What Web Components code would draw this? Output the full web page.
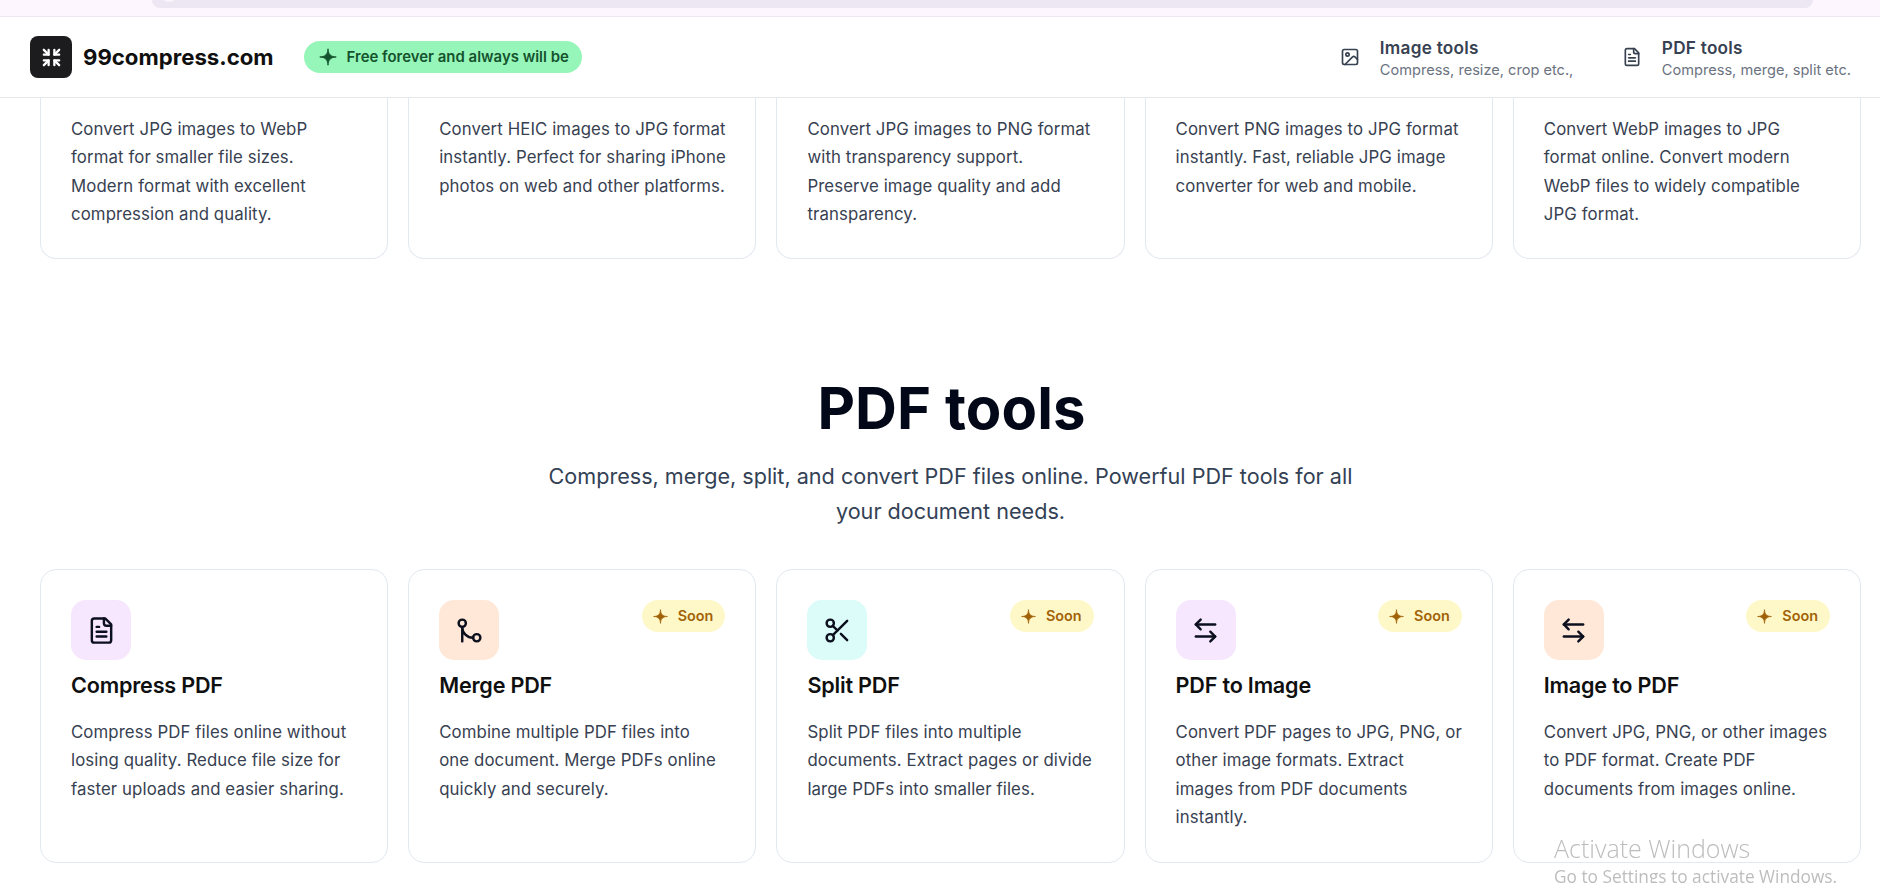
<!DOCTYPE html>
<html lang="en">
<head>
<meta charset="utf-8">
<title>99compress.com</title>
<style>
  html, body { margin: 0; height: 883px; overflow: hidden; background: #fff; }
  body { font-family: Inter, "Liberation Sans", sans-serif; }
</style>
</head>
<body>
<browser-strip></browser-strip>
<site-header></site-header>
<tool-grid cut>
  <tool-card cut text="Convert JPG images to WebP format for smaller file sizes.<br>Modern format with excellent compression and quality."></tool-card>
  <tool-card cut text="Convert HEIC images to JPG format instantly. Perfect for sharing iPhone photos on web and other platforms."></tool-card>
  <tool-card cut text="Convert JPG images to PNG format with transparency support. Preserve image quality and add transparency."></tool-card>
  <tool-card cut text="Convert PNG images to JPG format instantly. Fast, reliable JPG image converter for web and mobile."></tool-card>
  <tool-card cut text="Convert WebP images to JPG format online. Convert modern WebP files to widely compatible JPG format."></tool-card>
</tool-grid>
<section-heading title="PDF tools" text="Compress, merge, split, and convert PDF files online. Powerful PDF tools for all your document needs."></section-heading>
<tool-grid>
  <tool-card icon="file" tint="#f6e6fe" title="Compress PDF" text="Compress PDF files online without losing quality. Reduce file size for faster uploads and easier sharing."></tool-card>
  <tool-card icon="merge" tint="#ffe8d7" soon title="Merge PDF" text="Combine multiple PDF files into<br>one document. Merge PDFs online quickly and securely."></tool-card>
  <tool-card icon="scissors" tint="#dbfcf9" soon title="Split PDF" text="Split PDF files into multiple documents. Extract pages or divide large PDFs into smaller files."></tool-card>
  <tool-card icon="swap" tint="#f6e6fe" soon title="PDF to Image" text="Convert PDF pages to JPG, PNG, or other image formats. Extract images from PDF documents instantly."></tool-card>
  <tool-card icon="swap" tint="#ffe8d7" soon title="Image to PDF" text="Convert JPG, PNG, or other images to PDF format. Create PDF documents from images online."></tool-card>
</tool-grid>
<activate-notice></activate-notice>

<script>
const ICONS = {
  file: '<path d="M15 2H6a2 2 0 0 0-2 2v16a2 2 0 0 0 2 2h12a2 2 0 0 0 2-2V7Z"/><path d="M14 2v4a2 2 0 0 0 2 2h4"/><path d="M10 9H8"/><path d="M16 13H8"/><path d="M16 17H8"/>',
  merge: '<circle cx="18" cy="18" r="3"/><circle cx="6" cy="6" r="3"/><path d="M6 21V9a9 9 0 0 0 9 9"/>',
  scissors: '<circle cx="6" cy="6" r="3"/><path d="M8.12 8.12 12 12"/><path d="M20 4 8.12 15.88"/><circle cx="6" cy="18" r="3"/><path d="M14.8 14.8 20 20"/>',
  swap: '<path d="M8 3 4 7l4 4"/><path d="M4 7h16"/><path d="m16 21 4-4-4-4"/><path d="M20 17H4"/>',
  image: '<rect x="3" y="3" width="18" height="18" rx="2"/><circle cx="9" cy="9" r="2"/><path d="m21 15-3.086-3.086a2 2 0 0 0-2.828 0L6 21"/>',
  shrink: '<path d="M4 9h5V4"/><path d="M4 4l5 5"/><path d="M20 9h-5V4"/><path d="M20 4l-5 5"/><path d="M4 15h5v5"/><path d="M4 20l5-5"/><path d="M20 15h-5v5"/><path d="M20 20l-5-5"/>'
};
const SPARK = 'M12 1C12.4 8 15 11.6 23 12C15 12.4 12.4 16 12 23C11.6 16 9 12.4 1 12C9 11.6 11.6 8 12 1Z';

function iconSvg(name, size, stroke) {
  return `<svg width="${size}" height="${size}" viewBox="0 0 24 24" fill="none" stroke="currentColor" stroke-width="${stroke}" stroke-linecap="round" stroke-linejoin="round">${ICONS[name]}</svg>`;
}

class BrowserStrip extends HTMLElement {
  constructor() {
    super();
    this.attachShadow({ mode: "open" }).innerHTML = `
    <style>
      :host { display: block; height: 16px; background: #fdf6fe; border-bottom: 1px solid #eee6f2; }
      .bar { position: relative; overflow: hidden; height: 8px; margin: 0 67px 0 152px; background: #ede7f3; border-radius: 0 0 14px 14px; }
      .dot { position: absolute; left: 8px; top: -16px; width: 18px; height: 18px; border-radius: 50%; background: #f8f5fa; }
    </style>
    <div class="bar"><div class="dot"></div></div>`;
  }
}
customElements.define("browser-strip", BrowserStrip);

class NavLink extends HTMLElement {
  constructor() {
    super();
    const root = this.attachShadow({ mode: "open" });
    root.innerHTML = `
    <style>
      :host { display: flex; align-items: center; gap: 20px; color: #374151; }
      svg { display: block; flex: none; }
      .text { padding-top: 3px; }
      .title { font-size: 17.2px; line-height: 22px; font-weight: 600; letter-spacing: 0.25px; }
      .sub { font-size: 14.6px; line-height: 20px; color: #6b7280; margin-top: 1px; }
    </style>
    ${iconSvg(this.getAttribute("icon"), 20, 2)}
    <div class="text">
      <div class="title">${this.getAttribute("title")}</div>
      <div class="sub">${this.getAttribute("sub")}</div>
    </div>`;
  }
}
customElements.define("nav-link", NavLink);

class SiteHeader extends HTMLElement {
  constructor() {
    super();
    this.attachShadow({ mode: "open" }).innerHTML = `
    <style>
      :host { display: flex; align-items: center; height: 80px; box-sizing: content-box; padding: 0 29px 0 30px; background: #fff; border-bottom: 1px solid #e5e7eb; }
      .logo { display: flex; align-items: center; justify-content: center; width: 42px; height: 42px; border-radius: 8px; background: #1c1c1e; color: #fff; }
      .logo svg { display: block; }
      .name { margin: -2px 0 0 11px; font-size: 22.2px; font-weight: 700; color: #0f0f10; }
      .pill { display: flex; align-items: center; gap: 10px; height: 32px; margin-left: 30px; padding: 0 13px 0 15px; border-radius: 16px; background: #96f6b9; color: #14532d; font-size: 14.95px; font-weight: 600; }
      .pill svg { display: block; fill: #14532d; stroke: #14532d; stroke-width: 1.2; }
      nav { display: flex; gap: 48.5px; margin-left: auto; }
    </style>
    <div class="logo">${iconSvg("shrink", 23, 2.4)}</div>
    <div class="name">99compress.com</div>
    <div class="pill"><svg width="18" height="18" viewBox="0 0 24 24"><path d="${SPARK}"/></svg>Free forever and always will be</div>
    <nav>
      <nav-link icon="image" title="Image tools" sub="Compress, resize, crop etc.,"></nav-link>
      <nav-link icon="file" title="PDF tools" sub="Compress, merge, split etc."></nav-link>
    </nav>`;
  }
}
customElements.define("site-header", SiteHeader);

class ToolGrid extends HTMLElement {
  constructor() {
    super();
    this.attachShadow({ mode: "open" }).innerHTML = `
    <style>
      :host { display: grid; grid-template-columns: repeat(5, 1fr); gap: 20px; padding: 0 19px 0 40px; }
    </style>
    <slot></slot>`;
  }
}
customElements.define("tool-grid", ToolGrid);

class ToolCard extends HTMLElement {
  constructor() {
    super();
    const root = this.attachShadow({ mode: "open" });
    const cut = this.hasAttribute("cut");
    const head = cut ? "" : `
      <div class="head">
        <div class="icon" style="background:${this.getAttribute("tint")}">${iconSvg(this.getAttribute("icon"), 29, 2)}</div>
        ${this.hasAttribute("soon") ? `<div class="soon"><svg width="15" height="15" viewBox="0 0 24 24"><path d="${SPARK}"/></svg><span>Soon</span></div>` : ""}
      </div>
      <h3>${this.getAttribute("title")}</h3>`;
    root.innerHTML = `
    <style>
      :host { display: block; box-sizing: border-box; border: 1px solid #e2e8f0; border-radius: 16px; padding: 30px 30px 31px; background: #fff; }
      :host([cut]) { border-top: 0; border-radius: 0 0 16px 16px; padding: 17px 30px 30px; }
      .head { display: flex; justify-content: space-between; align-items: flex-start; height: 60px; }
      .icon { display: flex; align-items: center; justify-content: center; width: 60px; height: 60px; border-radius: 15px; color: #0b0f1e; }
      .icon svg { display: block; }
      .soon { display: flex; align-items: center; gap: 10px; height: 32px; padding: 0 12px 0 11px; border-radius: 16px; background: #fef8c8; color: #a16207; font-size: 14.4px; font-weight: 600; }
      .soon span { margin-top: -2px; }
      .soon svg { display: block; fill: #a16207; stroke: #a16207; stroke-width: 1.2; }
      h3 { margin: 12px 0 20px; font-size: 21.6px; line-height: 26px; font-weight: 600; color: #0f0f10; letter-spacing: -0.2px; }
      p { margin: 0 -4px 0 0; font-size: 16.8px; line-height: 28.3px; letter-spacing: 0.1px; color: #374151; }
    </style>
    ${head}
    <p>${this.getAttribute("text")}</p>`;
  }
}
customElements.define("tool-card", ToolCard);

class SectionHeading extends HTMLElement {
  constructor() {
    super();
    this.attachShadow({ mode: "open" }).innerHTML = `
    <style>
      :host { display: block; padding: 116px 19.5px 40px 40.5px; text-align: center; }
      h2 { margin: 0 0 17px; padding-left: 2px; font-size: 58px; line-height: 67px; font-weight: 700; color: #020817; letter-spacing: 0.1px; }
      p { margin: 0 auto; max-width: 830px; font-size: 21.6px; line-height: 35px; color: #334155; }
    </style>
    <h2>${this.getAttribute("title")}</h2>
    <p>${this.getAttribute("text")}</p>`;
  }
}
customElements.define("section-heading", SectionHeading);

class ActivateNotice extends HTMLElement {
  constructor() {
    super();
    this.attachShadow({ mode: "open" }).innerHTML = `
    <style>
      :host { position: fixed; left: 1554px; top: 832px; color: #bdbdbd; font-family: "Open Sans", "Noto Sans", sans-serif; pointer-events: none; white-space: nowrap; }
      .big { font-size: 25px; line-height: 32px; font-weight: 300; }
      .small { font-size: 17.3px; line-height: 26px; }
    </style>
    <div class="big">Activate Windows</div>
    <div class="small">Go to Settings to activate Windows.</div>`;
  }
}
customElements.define("activate-notice", ActivateNotice);
</script>
</body>
</html>
